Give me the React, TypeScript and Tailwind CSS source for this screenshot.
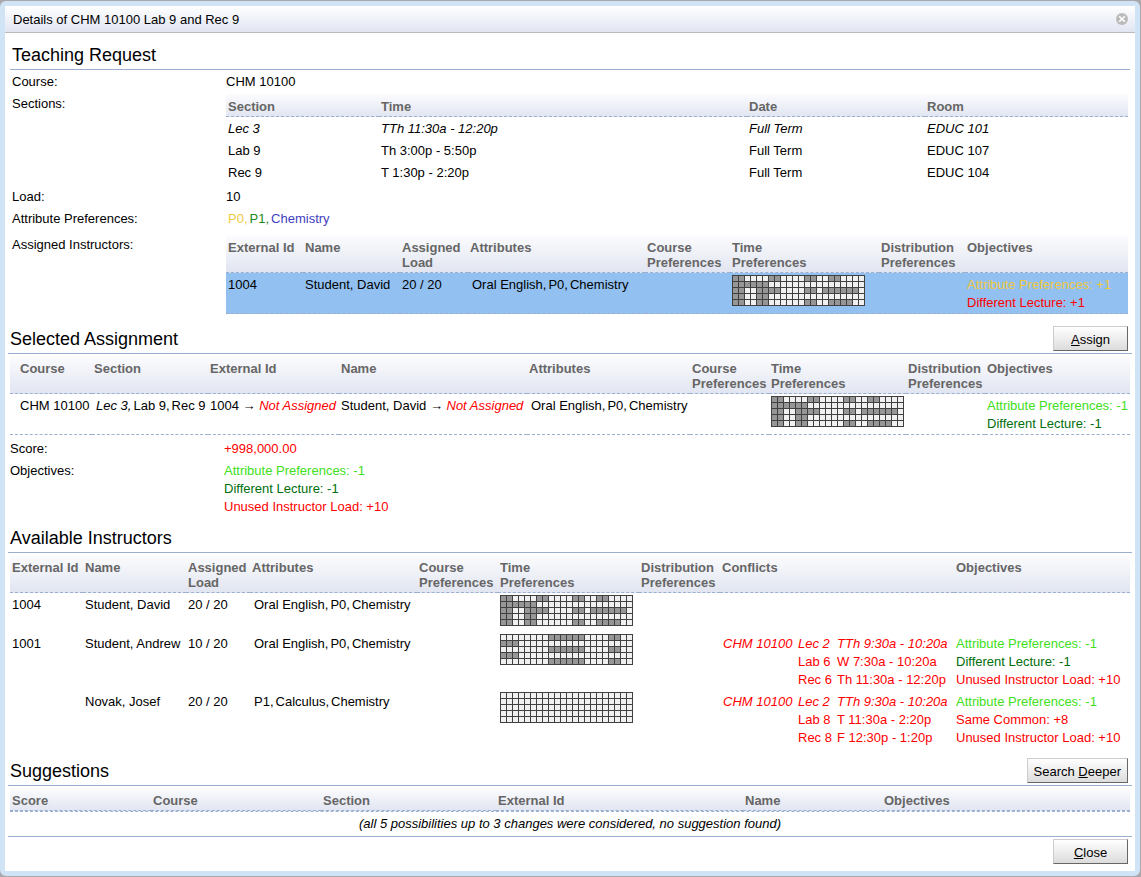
import React from "react";
import clsx from "clsx";

const DAVID = [
  "##....##....##..##....",
  "######................",
  "##..####....##.######.",
  "##..##................",
  "##..##......##..####..",
];

const ANDREW = [
  "........######....##..",
  "###...................",
  "........######....##..",
  "###...................",
  "........######....##..",
];

const EMPTY = Array(5).fill(".".repeat(22));

const TimeGrid = ({ rows }: { rows: string[] }) => (
  <svg width={133} height={31} className="mb-1 block" role="img" aria-label="Time preferences">
    <rect width={133} height={31} fill="#404040" />
    {rows.map((row, y) =>
      row.split("").map((c, x) => (
        <rect
          key={`${x}-${y}`}
          x={x * 6 + 1}
          y={y * 6 + 1}
          width={5}
          height={5}
          fill={c === "#" ? "#969696" : "#f0f0f0"}
        />
      ))
    )}
  </svg>
);

const List = ({ items }: { items: { text: string; color?: string }[] }) => (
  <div className="flex gap-0.5">
    {items.map((item, i) => (
      <span key={item.text} className={item.color}>
        {item.text}
        {i < items.length - 1 && ","}
      </span>
    ))}
  </div>
);

const ATTRS = [{ text: "Oral English" }, { text: "P0" }, { text: "Chemistry" }];

type Col = { label: string; w?: string; wrap?: boolean };

const Table = ({
  cols,
  indent,
  children,
}: {
  cols: Col[];
  indent?: boolean;
  children: React.ReactNode;
}) => (
  <table className="w-full table-fixed border-separate border-spacing-0 whitespace-nowrap">
    <thead className="bg-linear-to-b from-[#fcfcfe] to-[#e1e5f1]">
      <tr>
        {cols.map((c, i) => (
          <th
            key={c.label}
            className={clsx(
              "border-b border-dashed border-[#9bb0d0] pt-[5px] pr-0 pb-0.5 text-left align-top leading-[15px] font-bold text-[#666]",
              indent && i === 0 ? "pl-2.5" : "pl-0.5",
              c.wrap && "whitespace-pre-line",
              c.w
            )}
          >
            {c.label}
          </th>
        ))}
      </tr>
    </thead>
    <tbody>{children}</tbody>
  </table>
);

const Td = ({
  className = "pl-0.5",
  flush,
  children,
}: {
  className?: string;
  flush?: boolean;
  children?: React.ReactNode;
}) => (
  <td className={clsx("align-top", flush ? "py-0.5" : "pt-[3px] pb-px", className)}>{children}</td>
);

// flush keeps a nested table level with the top of the row
const Row = ({
  label,
  flush,
  children,
}: {
  label: string;
  flush?: boolean;
  children: React.ReactNode;
}) => (
  <div className="grid grid-cols-[214px_1fr]">
    <div className="pt-[3px] pb-px">{label}</div>
    <div className={flush ? "py-0.5" : "pt-[3px] pb-px"}>{children}</div>
  </div>
);

const Heading = ({ title, children }: { title: string; children?: React.ReactNode }) => (
  <div className="flex h-7 items-start justify-between border-b border-[#9bb0d0] pr-1 pl-0.5">
    <h2 className="text-lg leading-[26px]">{title}</h2>
    {children}
  </div>
);

const Button = ({ before = "", hot, after }: { before?: string; hot: string; after: string }) => (
  <button
    type="button"
    className="h-[25px] min-w-[75px] border border-t-[#ccc] border-r-[#666] border-b-[#666] border-l-[#ccc] bg-linear-to-b from-white to-[#dcdcdc] px-[6px] pt-0.5 leading-[18px]"
  >
    {before}
    <span className="underline">{hot}</span>
    {after}
  </button>
);

const Conflicts = ({ rows }: { rows: string[][] }) => (
  <div className="grid grid-cols-[75px_39px_1fr] pl-px text-[#f00]">
    {rows.map(([course, section, time], i) => (
      <div key={section} className={clsx("contents", i === 0 && "italic")}>
        <span>{course}</span>
        <span>{section}</span>
        <span>{time}</span>
      </div>
    ))}
  </div>
);

const LightGreen = ({ children }: { children: React.ReactNode }) => (
  <div className="text-[#40e020]">{children}</div>
);
const Green = ({ children }: { children: React.ReactNode }) => (
  <div className="text-[#006e0c]">{children}</div>
);
const Red = ({ children }: { children: React.ReactNode }) => (
  <div className="text-[#f00]">{children}</div>
);

const sectionCols: Col[] = [
  { label: "Section", w: "w-[153px]" },
  { label: "Time", w: "w-[368px]" },
  { label: "Date", w: "w-[178px]" },
  { label: "Room" },
];

const assignedCols: Col[] = [
  { label: "External Id", w: "w-[77px]" },
  { label: "Name", w: "w-[97px]" },
  { label: "Assigned\nLoad", w: "w-[68px]", wrap: true },
  { label: "Attributes", w: "w-[177px]" },
  { label: "Course\nPreferences", w: "w-[85px]", wrap: true },
  { label: "Time\nPreferences", w: "w-[149px]", wrap: true },
  { label: "Distribution\nPreferences", w: "w-[86px]", wrap: true },
  { label: "Objectives" },
];

const selectedCols: Col[] = [
  { label: "Course", w: "w-[82px]" },
  { label: "Section", w: "w-[116px]" },
  { label: "External Id", w: "w-[131px]" },
  { label: "Name", w: "w-[188px]" },
  { label: "Attributes", w: "w-[163px]" },
  { label: "Course\nPreferences", w: "w-[79px]", wrap: true },
  { label: "Time\nPreferences", w: "w-[137px]", wrap: true },
  { label: "Distribution\nPreferences", w: "w-[79px]", wrap: true },
  { label: "Objectives" },
];

const availableCols: Col[] = [
  { label: "External Id", w: "w-[73px]" },
  { label: "Name", w: "w-[103px]" },
  { label: "Assigned\nLoad", w: "w-[64px]", wrap: true },
  { label: "Attributes", w: "w-[167px]" },
  { label: "Course\nPreferences", w: "w-[81px]", wrap: true },
  { label: "Time\nPreferences", w: "w-[141px]", wrap: true },
  { label: "Distribution\nPreferences", w: "w-[81px]", wrap: true },
  { label: "Conflicts", w: "w-[234px]" },
  { label: "Objectives" },
];

const suggestionCols: Col[] = [
  { label: "Score", w: "w-[141px]" },
  { label: "Course", w: "w-[170px]" },
  { label: "Section", w: "w-[175px]" },
  { label: "External Id", w: "w-[247px]" },
  { label: "Name", w: "w-[139px]" },
  { label: "Objectives" },
];

const sections = [
  ["Lec 3", "TTh 11:30a - 12:20p", "Full Term", "EDUC 101"],
  ["Lab 9", "Th 3:00p - 5:50p", "Full Term", "EDUC 107"],
  ["Rec 9", "T 1:30p - 2:20p", "Full Term", "EDUC 104"],
];

const dashed = "border-b border-dashed border-[#9bb0d0]";

const App = () => {
  return (
    <div className="min-h-screen bg-[#a9a9ad] pt-px pr-px pb-px font-['Liberation_Sans',Arial,sans-serif] text-[13px] leading-[18px] text-black">
      <div role="dialog" aria-labelledby="title" className="rounded-md border-5 border-[#d0e4f6] bg-white">
        <header className="flex h-[27px] items-center justify-between border-b border-[#bbb] bg-linear-to-b from-white to-[#e1e5f1] pr-[7px] pl-2">
          <h1 id="title" className="pt-0.5">
            Details of CHM 10100 Lab 9 and Rec 9
          </h1>
          <button type="button" aria-label="Close dialog">
            <svg width={12} height={12} viewBox="0 0 12 12" className="block">
              <circle cx={6} cy={6} r={6} fill="#bbb" />
              <path d="M3.2 3.2l5.6 5.6M8.8 3.2L3.2 8.8" stroke="#fff" strokeWidth={1.6} />
            </svg>
          </button>
        </header>

        <main className="px-[3px] pt-[9px] pb-[7px]">
          <section className="px-0.5">
            <Heading title="Teaching Request" />
            <div className="px-0.5">
              <Row label="Course:">CHM 10100</Row>
              <Row label="Sections:" flush>
                <Table cols={sectionCols}>
                  {sections.map((s, i) => (
                    <tr key={s[0]} className={i === 0 ? "italic" : undefined}>
                      {s.map((v) => (
                        <Td key={v}>{v}</Td>
                      ))}
                    </tr>
                  ))}
                </Table>
              </Row>
              <Row label="Load:">10</Row>
              <Row label="Attribute Preferences:">
                <div className="pl-0.5">
                  <List
                    items={[
                      { text: "P0", color: "text-[#f0c840]" },
                      { text: "P1", color: "text-[#1e8a20]" },
                      { text: "Chemistry", color: "text-[#4040c0]" },
                    ]}
                  />
                </div>
              </Row>
              <div className="pt-1">
                <Row label="Assigned Instructors:" flush>
                  <Table cols={assignedCols}>
                    <tr className="bg-[#92c0f0]">
                      <Td className={clsx("pl-0.5", dashed)}>1004</Td>
                      <Td className={clsx("pl-0.5", dashed)}>Student, David</Td>
                      <Td className={clsx("pl-0.5", dashed)}>20 / 20</Td>
                      <Td className={clsx("pl-1", dashed)}>
                        <List items={ATTRS} />
                      </Td>
                      <Td className={dashed} />
                      <Td flush className={clsx("pl-0.5", dashed)}>
                        <TimeGrid rows={DAVID} />
                      </Td>
                      <Td className={dashed} />
                      <Td className={clsx("pl-0.5", dashed)}>
                        <div className="text-[#f0c840]">Attribute Preferences: +1</div>
                        <Red>Different Lecture: +1</Red>
                      </Td>
                    </tr>
                  </Table>
                </Row>
              </div>
            </div>
          </section>

          <section className="pt-2.5">
            <Heading title="Selected Assignment">
              <Button hot="A" after="ssign" />
            </Heading>
            <div className="px-0.5 py-0.5">
              <Table cols={selectedCols} indent>
                <tr>
                  <Td className={clsx("pl-2.5", dashed)}>CHM 10100</Td>
                  <Td className={clsx("pl-1", dashed)}>
                    <List
                      items={[{ text: "Lec 3", color: "italic" }, { text: "Lab 9" }, { text: "Rec 9" }]}
                    />
                  </Td>
                  <Td className={clsx("pl-0.5", dashed)}>
                    1004 → <i className="text-[#f00]">Not Assigned</i>
                  </Td>
                  <Td className={clsx("pl-0.5", dashed)}>
                    Student, David → <i className="text-[#f00]">Not Assigned</i>
                  </Td>
                  <Td className={clsx("pl-1", dashed)}>
                    <List items={ATTRS} />
                  </Td>
                  <Td className={dashed} />
                  <Td flush className={clsx("pl-0.5", dashed)}>
                    <TimeGrid rows={DAVID} />
                  </Td>
                  <Td className={dashed} />
                  <Td className={clsx("pl-0.5", dashed)}>
                    <LightGreen>Attribute Preferences: -1</LightGreen>
                    <Green>Different Lecture: -1</Green>
                  </Td>
                </tr>
              </Table>
            </div>
            <div className="pl-0.5">
              <Row label="Score:">
                <Red>+998,000.00</Red>
              </Row>
              <Row label="Objectives:">
                <LightGreen>Attribute Preferences: -1</LightGreen>
                <Green>Different Lecture: -1</Green>
                <Red>Unused Instructor Load: +10</Red>
              </Row>
            </div>
          </section>

          <section className="pt-2">
            <Heading title="Available Instructors" />
            <div className="px-0.5 pt-0.5">
              <Table cols={availableCols}>
                <tr>
                  <Td>1004</Td>
                  <Td>Student, David</Td>
                  <Td>20 / 20</Td>
                  <Td className="pl-1">
                    <List items={ATTRS} />
                  </Td>
                  <Td />
                  <Td flush>
                    <TimeGrid rows={DAVID} />
                  </Td>
                  <Td />
                  <Td />
                  <Td />
                </tr>
                <tr>
                  <Td>1001</Td>
                  <Td>Student, Andrew</Td>
                  <Td>10 / 20</Td>
                  <Td className="pl-1">
                    <List items={ATTRS} />
                  </Td>
                  <Td />
                  <Td flush>
                    <TimeGrid rows={ANDREW} />
                  </Td>
                  <Td />
                  <Td>
                    <Conflicts
                      rows={[
                        ["CHM 10100", "Lec 2", "TTh 9:30a - 10:20a"],
                        ["", "Lab 6", "W 7:30a - 10:20a"],
                        ["", "Rec 6", "Th 11:30a - 12:20p"],
                      ]}
                    />
                  </Td>
                  <Td>
                    <LightGreen>Attribute Preferences: -1</LightGreen>
                    <Green>Different Lecture: -1</Green>
                    <Red>Unused Instructor Load: +10</Red>
                  </Td>
                </tr>
                <tr>
                  <Td />
                  <Td>Novak, Josef</Td>
                  <Td>20 / 20</Td>
                  <Td className="pl-1">
                    <List items={[{ text: "P1" }, { text: "Calculus" }, { text: "Chemistry" }]} />
                  </Td>
                  <Td />
                  <Td flush>
                    <TimeGrid rows={EMPTY} />
                  </Td>
                  <Td />
                  <Td>
                    <Conflicts
                      rows={[
                        ["CHM 10100", "Lec 2", "TTh 9:30a - 10:20a"],
                        ["", "Lab 8", "T 11:30a - 2:20p"],
                        ["", "Rec 8", "F 12:30p - 1:20p"],
                      ]}
                    />
                  </Td>
                  <Td>
                    <LightGreen>Attribute Preferences: -1</LightGreen>
                    <Red>Same Common: +8</Red>
                    <Red>Unused Instructor Load: +10</Red>
                  </Td>
                </tr>
              </Table>
            </div>
          </section>

          <section className="border-b border-[#9bb0d0] pt-2.5">
            <Heading title="Suggestions">
              <Button before="Search " hot="D" after="eeper" />
            </Heading>
            <div className="px-0.5 py-0.5">
              <Table cols={suggestionCols}>
                <tr>
                  <td
                    colSpan={6}
                    className="border-t border-dashed border-[#9bb0d0] pt-[3px] pb-px text-center italic"
                  >
                    (all 5 possibilities up to 3 changes were considered, no suggestion found)
                  </td>
                </tr>
              </Table>
            </div>
          </section>

          <div className="flex justify-end pt-0.5 pr-1">
            <Button hot="C" after="lose" />
          </div>
        </main>
      </div>
    </div>
  );
};

export default App;
